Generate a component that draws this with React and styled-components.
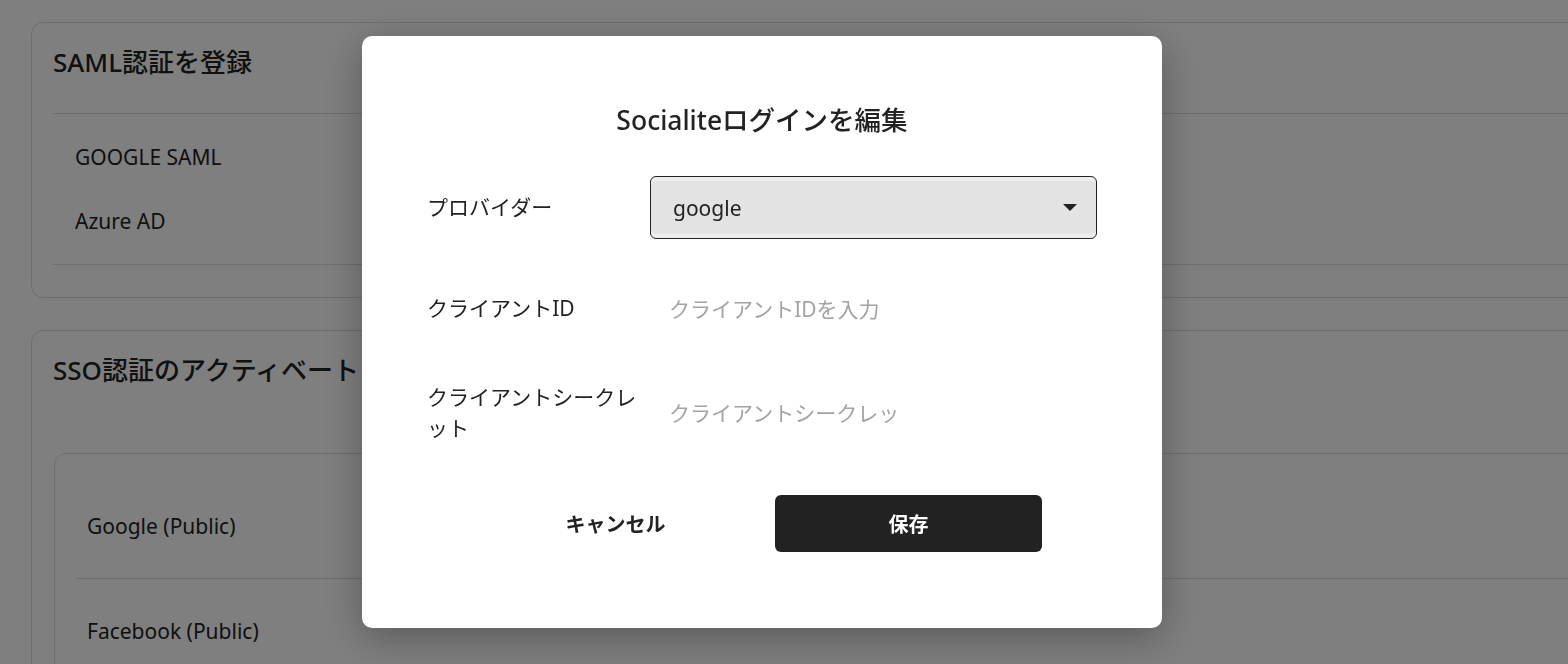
import React from "react";
import styled, { createGlobalStyle } from "styled-components";

const GlobalStyle = createGlobalStyle`
  html, body {
    margin: 0;
    height: 100%;
    overflow: hidden;
    background: #ffffff;
  }
  body {
    font-family: "Noto Sans", "Noto Sans CJK JP", sans-serif;
    color: #222;
  }
`;

const Page = styled.div`
  padding: 22px 0 0 31px;
  width: 1620px;
  display: flex;
  flex-direction: column;
  gap: 32px;
`;

const Card = styled.section`
  border: 1px solid #dcdcdc;
  border-radius: 12px;
  padding: 0 21px;
  background: #fff;
`;

const CardTitle = styled.h2`
  margin: 0;
  padding-top: 23px;
  font-size: 26px;
  line-height: 32px;
  font-weight: 500;
  height: ${(p) => p.$height}px;
  box-sizing: border-box;
  border-bottom: ${(p) => (p.$divided ? "1px solid #dcdcdc" : "none")};
`;

const SamlList = styled.ul`
  list-style: none;
  margin: 0;
  padding: 11px 0 11px 22px;
  border-bottom: 1px solid #dcdcdc;
  margin-bottom: 32px;
`;

const SamlItem = styled.li`
  height: 64px;
  display: flex;
  align-items: center;
  font-size: 21px;
`;

const InnerCard = styled.div`
  border: 1px solid #dcdcdc;
  border-radius: 12px;
  padding: 20px 21px 0;
  margin-left: 1px;
  height: 400px;
`;

const ProviderRow = styled.div`
  height: 104px;
  display: flex;
  align-items: center;
  padding-left: 11px;
  font-size: 21px;
  border-bottom: ${(p) => (p.$divided ? "1px solid #dcdcdc" : "none")};
`;

const Overlay = styled.div`
  position: fixed;
  inset: 0;
  background: rgba(0, 0, 0, 0.5);
  display: flex;
  align-items: flex-start;
  padding: 36px 0 0 362px;
`;

const Modal = styled.div`
  width: 800px;
  height: 592px;
  box-sizing: border-box;
  background: #fff;
  border-radius: 10px;
  box-shadow: 0 10px 40px rgba(0, 0, 0, 0.3);
  padding: 64px 65px 0;
  display: flex;
  flex-direction: column;
`;

const ModalTitle = styled.h1`
  margin: 0 0 36px;
  text-align: center;
  font-size: 26.5px;
  line-height: 40px;
  font-weight: 500;
  color: #222;
`;

const Form = styled.div`
  display: grid;
  grid-template-columns: 223px 1fr;
  grid-template-rows: 63px 63px 70px;
  row-gap: 38px;
  align-items: center;
`;

const Label = styled.label`
  font-size: 21px;
  line-height: 31px;
  color: #222;
`;

const Select = styled.div`
  height: 63px;
  box-sizing: border-box;
  border: 1px solid #222;
  border-radius: 6px;
  background: #e3e3e3;
  box-shadow: inset 0 4px 0 #eeeeee, inset 0 -4px 0 #eeeeee;
  display: flex;
  align-items: center;
  justify-content: space-between;
  padding: 0 19px 0 22px;
  font-size: 21px;
  color: #222;
`;

const Input = styled.input`
  width: 255px;
  height: 63px;
  box-sizing: border-box;
  border: none;
  outline: none;
  padding: 0 0 0 19px;
  font-family: inherit;
  font-size: 21px;
  color: #222;
  background: transparent;
  &::placeholder {
    color: #a3a3a3;
  }
`;

const Actions = styled.div`
  display: flex;
  justify-content: center;
  gap: 26px;
  margin-top: 47px;
`;

const Button = styled.button`
  width: 267px;
  height: 57px;
  border: none;
  border-radius: 6px;
  font-family: inherit;
  font-size: 20px;
  font-weight: 700;
  cursor: pointer;
  background: ${(p) => (p.$primary ? "#222" : "transparent")};
  color: ${(p) => (p.$primary ? "#fff" : "#222")};
`;

const Caret = () => (
  <svg width="14" height="7" viewBox="0 0 14 7">
    <path d="M0 0 L14 0 L7 7 Z" fill="#222" />
  </svg>
);

export default function App() {
  return (
    <>
      <GlobalStyle />
      <Page>
        <Card>
          <CardTitle $height={91} $divided>
            SAML認証を登録
          </CardTitle>
          <SamlList>
            <SamlItem>GOOGLE SAML</SamlItem>
            <SamlItem>Azure AD</SamlItem>
          </SamlList>
        </Card>
        <Card>
          <CardTitle $height={122}>SSO認証のアクティベート</CardTitle>
          <InnerCard>
            <ProviderRow $divided>Google (Public)</ProviderRow>
            <ProviderRow>Facebook (Public)</ProviderRow>
          </InnerCard>
        </Card>
      </Page>
      <Overlay>
        <Modal>
          <ModalTitle>Socialiteログインを編集</ModalTitle>
          <Form>
            <Label>プロバイダー</Label>
            <Select>
              <span>google</span>
              <Caret />
            </Select>
            <Label>クライアントID</Label>
            <Input placeholder="クライアントIDを入力" />
            <Label>クライアントシークレット</Label>
            <Input placeholder="クライアントシークレット" />
          </Form>
          <Actions>
            <Button>キャンセル</Button>
            <Button $primary>保存</Button>
          </Actions>
        </Modal>
      </Overlay>
    </>
  );
}
